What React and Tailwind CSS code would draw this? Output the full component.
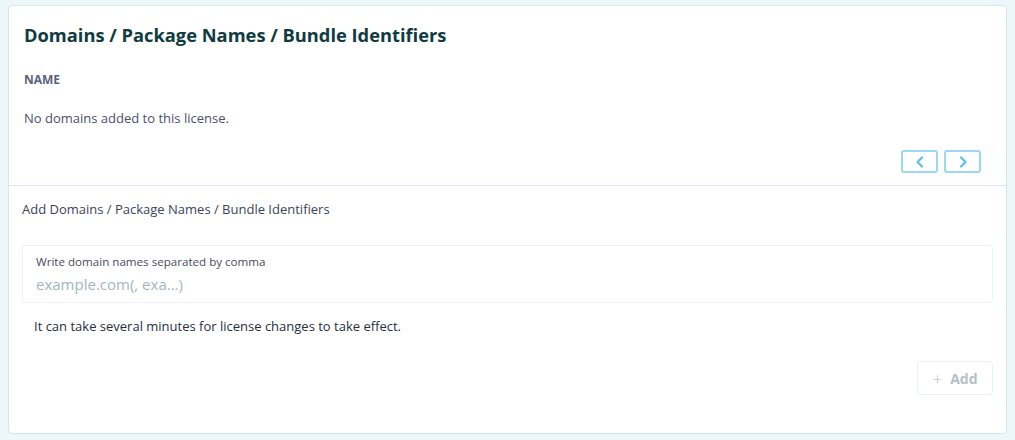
import React from 'react';

const ChevronLeft = () => (
  <svg width="10" height="12" viewBox="0 0 10 12" fill="none">
    <path d="M7 1.5L2.5 6L7 10.5" stroke="#5cbfe8" strokeWidth="2.2" strokeLinecap="round" strokeLinejoin="round" />
  </svg>
);

const ChevronRight = () => (
  <svg width="10" height="12" viewBox="0 0 10 12" fill="none">
    <path d="M3 1.5L7.5 6L3 10.5" stroke="#5cbfe8" strokeWidth="2.2" strokeLinecap="round" strokeLinejoin="round" />
  </svg>
);

export default function App() {
  return (
    <div className="w-[1015px] h-[440px] bg-[#edf6f9] pt-[5px] pl-[8px] pr-[8px] font-['Open_Sans',sans-serif]">
      <div className="w-[999px] h-[429px] bg-white border border-[#d3e6ef] rounded-[4px] flex flex-col">
        {/* Domains list */}
        <div className="px-[15px] pt-[17px] pb-[12px] border-b border-[#d9ebf2]">
          <h2 className="text-[18.3px] leading-[24px] font-bold text-[#0f3b41]">
            Domains / Package Names / Bundle Identifiers
          </h2>
          <div className="mt-[25px] text-[12px] leading-[16px] font-bold text-[#5b627a]">NAME</div>
          <p className="mt-[22px] text-[13px] leading-[16px] text-[#4b5169]">No domains added to this license.</p>
          <div className="mt-[24px] flex justify-end gap-[6px] pr-[10px]">
            <button className="w-[37px] h-[23px] border-2 border-[#9bd7f0] rounded-[3px] flex items-center justify-center">
              <ChevronLeft />
            </button>
            <button className="w-[37px] h-[23px] border-2 border-[#9bd7f0] rounded-[3px] flex items-center justify-center">
              <ChevronRight />
            </button>
          </div>
        </div>

        {/* Add form */}
        <div className="px-[13px] pt-[15px]">
          <div className="text-[13px] leading-[16px] text-[#3d4459]">Add Domains / Package Names / Bundle Identifiers</div>
          <div className="mt-[28px] border border-[#edf3f5] rounded-[4px] px-[13px] pt-[8px] pb-[8px]">
            <div className="text-[11.6px] leading-[15px] text-[#474d60]">Write domain names separated by comma</div>
            <div className="mt-[5px] text-[15px] leading-[20px] text-[#a3b6bd]">example.com(, exa...)</div>
          </div>
          <p className="mt-[15px] pl-[12px] text-[13px] leading-[16px] text-[#26303f]">
            It can take several minutes for license changes to take effect.
          </p>
          <div className="mt-[27px] flex justify-end">
            <button className="w-[76px] h-[34px] border border-[#e8f0f3] rounded-[4px] flex items-center justify-center gap-[8px] text-[14px] font-bold text-[#b5c0c6]">
              <span className="text-[17px] font-light leading-none">+</span>
              <span>Add</span>
            </button>
          </div>
        </div>
      </div>
    </div>
  );
}
